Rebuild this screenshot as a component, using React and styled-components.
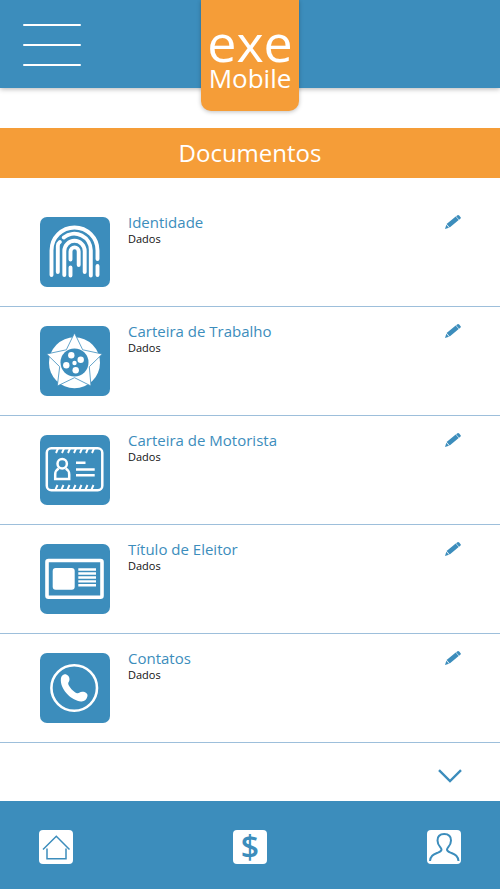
import styled, { createGlobalStyle } from "styled-components"

const blue = "#3c8dbc"
const orange = "#f59d38"

const documents = [
  { title: "Identidade", icon: <FingerprintIcon /> },
  { title: "Carteira de Trabalho", icon: <StarIcon /> },
  { title: "Carteira de Motorista", icon: <LicenseIcon /> },
  { title: "Título de Eleitor", icon: <VoterIcon /> },
  { title: "Contatos", icon: <PhoneIcon /> },
]

function FingerprintIcon() {
  return (
    <svg viewBox="0 0 70 70" fill="none" stroke="#fff" strokeWidth="3.9" strokeLinecap="round">
      <path d="M11.500 58V33.5a23 23 0 0 1 46 0V42M57.500 49v9" />
      <path d="M17.8 55V29q0-2.500 2-4M23.8 20.500A16.500 16.500 0 0 1 50.800 34v24.500" />
      <path d="M24.300 58V34a10.200 10.200 0 0 1 20.400 0v21" />
      <path d="M30.500 42.500V34.500a4.100 4.100 0 0 1 8.200 0V48M30.500 50.500v8" />
    </svg>
  )
}

function StarIcon() {
  return (
    <svg viewBox="0 0 70 70" fill="#fff">
      <circle cx="34.500" cy="36.700" r="25.500" />
      <path
        d="M34.500 7 42.700 23.800 62.300 28 49.300 40.700 51 60 34.500 51.700 17.300 60 19.700 40.700 6.700 28 26.300 23.800Z"
        stroke={blue}
        strokeWidth="0.8"
      />
      <circle cx="34.500" cy="36.500" r="14" fill={blue} />
      <circle cx="31.300" cy="29.300" r="3.200" />
      <circle cx="40.700" cy="33.700" r="3.200" />
      <circle cx="34.500" cy="37" r="2.200" />
      <circle cx="26.300" cy="39.300" r="3.200" />
      <circle cx="35.700" cy="44.300" r="3.200" />
    </svg>
  )
}

function LicenseIcon() {
  return (
    <svg viewBox="0 0 70 70" fill="none" stroke="#fff" strokeWidth="2.500">
      <rect x="6.800" y="13.200" width="55.500" height="42" rx="4.500" />
      <path
        d="M18 13.500l-2 4.500M24 13.500l-2 4.500M30 13.500l-2 4.500M36 13.500l-2 4.500M42 13.500l-2 4.500M48 13.500l-2 4.500M54 13.500l-2 4.500M17.500 50l-2 4.500M23.500 50l-2 4.500M29.500 50l-2 4.500M35.500 50l-2 4.500M41.500 50l-2 4.500M47.500 50l-2 4.500M53.500 50l-2 4.500"
        strokeWidth="1.900"
      />
      <circle cx="22.200" cy="28.800" r="4.700" />
      <path d="M18.700 33.500q-3.500 2-3.500 6V44H29.200v-4.500q0-4-3.500-6" />
      <path d="M36 27.700h9.500M36 34.500h18.700M36 40.200h18.700" strokeWidth="2.400" />
    </svg>
  )
}

function VoterIcon() {
  return (
    <svg viewBox="0 0 70 70" fill="none" stroke="#fff">
      <rect x="7" y="16.500" width="55" height="36.800" rx="1.500" strokeWidth="3.600" />
      <rect x="12.700" y="24" width="22" height="21.700" rx="3" fill="#fff" stroke="none" />
      <path d="M38.300 25.500H56M38.300 29.500H56M38.300 33.500H56M38.300 37.400H56M38.300 41.300H56" strokeWidth="2.400" />
    </svg>
  )
}

function PhoneIcon() {
  return (
    <svg viewBox="0 0 70 70" fill="#fff">
      <circle cx="34.200" cy="35" r="22.800" fill="none" stroke="#fff" strokeWidth="2.600" />
      <path d="M24.500 21.300C27.300 21 29.500 23.500 29.500 26.300C29.500 28.500 28.200 29.300 28.200 30.500C28.200 33.300 34 39.500 37 40.200C39.500 40.500 39.500 38.800 42.300 38.800C45.500 38.800 48 40.800 47.500 43C46.800 46.500 44.500 48.800 41 48.500C32 47.500 21.300 38 20.800 27.500C20.700 24 22 21.700 24.500 21.300Z" />
    </svg>
  )
}

const App = () => {
  return (
    <Page>
      <GlobalStyle />
      <Header>
        <MenuButton aria-label="Menu">
          <span />
          <span />
          <span />
        </MenuButton>
        <Logo>
          <LogoName>exe</LogoName>
          <LogoSub>Mobile</LogoSub>
        </Logo>
      </Header>
      <Banner>Documentos</Banner>
      <List>
        {documents.map((doc) => (
          <Row key={doc.title}>
            <Tile>{doc.icon}</Tile>
            <Info>
              <h2>{doc.title}</h2>
              <p>Dados</p>
            </Info>
            <EditButton aria-label={`Editar ${doc.title}`}>
              <svg width="16" height="14" viewBox="0 0 16 14" fill={blue}>
                <path d="M0 14 1.300 9.700 4 12.800ZM1.600 9.100 10.700 1.600 13.700 5 4.700 12.500ZM11.100 1.300 12.500.2Q13.400-.3 14.200.6L15.600 2.200Q16.200 3 15.500 3.600L14.100 4.700Z" />
              </svg>
            </EditButton>
          </Row>
        ))}
      </List>
      <More>
        <button aria-label="Ver mais">
          <svg width="24" height="14" viewBox="0 0 24 14" fill="none" stroke={blue} strokeWidth="2.400">
            <path d="M1 1.200 12 12 23 1.200" />
          </svg>
        </button>
      </More>
      <Footer>
        <NavButton aria-label="Início">
          <svg viewBox="0 0 34 34" fill="none" stroke={blue} strokeWidth="1.500">
            <path d="M4 19.500 17.300 6.300 30.500 19.500M8 18.500V28.700H27V18.500" />
          </svg>
        </NavButton>
        <NavButton aria-label="Finanças">
          <b>$</b>
        </NavButton>
        <NavButton aria-label="Perfil">
          <svg viewBox="0 0 34 34" fill="none" stroke={blue} strokeWidth="2">
            <path d="M3 31C3.500 26 6 24.500 10 23C13 21.800 14.500 21.500 14.500 19.500C14.500 17.500 10.500 16 10.500 10.500C10.500 6.500 13 4 17.200 4C21.500 4 24 6.500 24 10.500C24 16 20 17.500 20 19.500C20 21.500 21.500 21.800 24.500 23C28.500 24.500 31 26 31.500 31" />
          </svg>
        </NavButton>
      </Footer>
    </Page>
  )
}

const GlobalStyle = createGlobalStyle`
*{
    box-sizing:border-box;
    margin:0;
    padding:0;
}
body{
    font-family:"Open Sans", "Noto Sans", sans-serif;
    background:white;
}
button{
    border:none;
    background:none;
    font-family:inherit;
    cursor:pointer;
}
svg{
    display:block;
}
`
const Page = styled.div`
min-height:100vh;
display:flex;
flex-direction:column;
`
const Header = styled.header`
display:grid;
grid-template-columns:1fr auto 1fr;
align-items:start;
height:88px;
background:${blue};
box-shadow:0 1px 5px rgba(0, 0, 0, 0.3);
`
const MenuButton = styled.button`
display:flex;
flex-direction:column;
gap:18px;
width:58px;
margin:24px 0 0 23px;
span{
    height:2px;
    border-radius:1px;
    background:white;
}
`
const Logo = styled.div`
width:98px;
height:111px;
padding-top:20px;
border-radius:0 0 10px 10px;
background:${orange};
box-shadow:0 1px 4px rgba(0, 0, 0, 0.25);
color:white;
text-align:center;
`
const LogoName = styled.div`
font-size:52px;
line-height:44px;
`
const LogoSub = styled.div`
font-size:26px;
line-height:28px;
`
const Banner = styled.h1`
margin-top:40px;
background:${orange};
color:white;
text-align:center;
font-size:24px;
font-weight:400;
line-height:50px;
`
const List = styled.ul`
padding-top:20px;
list-style:none;
`
const Row = styled.li`
display:flex;
align-items:flex-start;
padding:15px 39px 19px 40px;
border-bottom:1px solid #9dbfdb;
`
const Tile = styled.div`
width:70px;
height:70px;
margin:4px 18px 0 0;
border-radius:7px;
background:${blue};
`
const Info = styled.div`
flex:1;
h2{
    color:${blue};
    font-size:15px;
    font-weight:400;
    line-height:18px;
}
p{
    color:#111;
    font-size:11px;
    line-height:16px;
}
`
const EditButton = styled.button`
margin-top:2px;
`
const More = styled.div`
display:flex;
justify-content:flex-end;
padding:26px 38px 18px;
`
const Footer = styled.footer`
display:flex;
justify-content:space-between;
margin-top:auto;
padding:29px 39px 25px;
background:${blue};
`
const NavButton = styled.button`
width:34px;
height:34px;
border-radius:4px;
background:white;
color:${blue};
b{
    display:block;
    font-size:32px;
    font-weight:600;
    line-height:34px;
}
`
export default App
